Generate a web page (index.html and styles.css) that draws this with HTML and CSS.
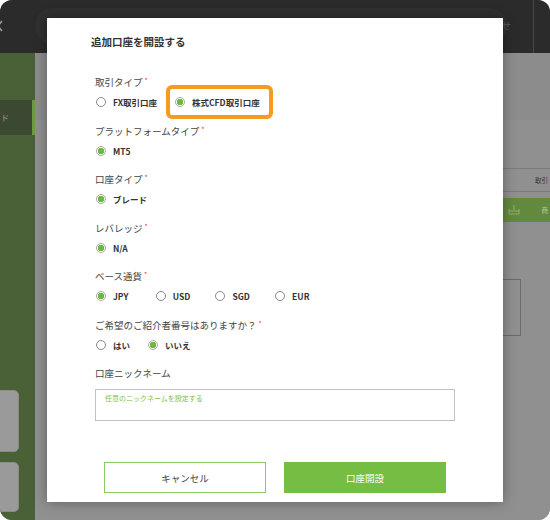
FILE: index.html
```html
<!DOCTYPE html>
<html lang="ja">
<head>
<meta charset="utf-8">
<title>追加口座を開設する</title>
<link rel="stylesheet" href="styles.css">
</head>
<body>
<div class="window">
  <header class="topbar">
    <svg class="back" width="8" height="12" viewBox="0 0 8 12"><path d="M5 1 L1 6 L5 11" fill="none" stroke="#9a9a9a" stroke-width="1.6"/></svg>
    <div class="pill"><span class="pill-text">お知らせ</span></div>
    <div class="divider"></div>
  </header>
  <div class="content">
    <aside class="sidebar">
      <div class="side-item"><span>ド</span></div>
      <div class="side-box side-box--tall"></div>
      <div class="side-box"></div>
    </aside>
    <main class="main">
      <div class="m-head"></div>
      <div class="m-row"><span>取引</span></div>
      <div class="m-band">
        <svg width="12" height="10" viewBox="0 0 12 10"><path d="M6 0 V5 M1 4 V9 H11 V4 M1 6 H11" fill="none" stroke="#8fb06a" stroke-width="1"/></svg>
        <span>商</span>
      </div>
      <div class="m-box"></div>
    </main>
  </div>

  <div class="modal">
    <h1 class="title">追加口座を開設する</h1>

    <div class="field">
      <div class="label">取引タイプ<i>*</i></div>
      <div class="options">
        <span class="option"><span class="radio"></span>FX取引口座</span>
        <span class="option option--hl"><span class="radio radio--on"></span>株式CFD取引口座</span>
      </div>
    </div>

    <div class="field">
      <div class="label">プラットフォームタイプ<i>*</i></div>
      <div class="options">
        <span class="option"><span class="radio radio--on"></span>MT5</span>
      </div>
    </div>

    <div class="field">
      <div class="label">口座タイプ<i>*</i></div>
      <div class="options">
        <span class="option"><span class="radio radio--on"></span>ブレード</span>
      </div>
    </div>

    <div class="field">
      <div class="label">レバレッジ<i>*</i></div>
      <div class="options">
        <span class="option"><span class="radio radio--on"></span>N/A</span>
      </div>
    </div>

    <div class="field">
      <div class="label">ベース通貨<i>*</i></div>
      <div class="options options--fixed">
        <span class="option"><span class="radio radio--on"></span>JPY</span>
        <span class="option"><span class="radio"></span>USD</span>
        <span class="option"><span class="radio"></span>SGD</span>
        <span class="option"><span class="radio"></span>EUR</span>
      </div>
    </div>

    <div class="field">
      <div class="label">ご希望のご紹介者番号はありますか？<i>*</i></div>
      <div class="options">
        <span class="option"><span class="radio"></span>はい</span>
        <span class="option"><span class="radio radio--on"></span>いいえ</span>
      </div>
    </div>

    <div class="field field--nick">
      <div class="label">口座ニックネーム</div>
      <textarea class="nick" placeholder="任意のニックネームを設定する"></textarea>
    </div>

    <div class="actions">
      <button class="btn btn--cancel">キャンセル</button>
      <button class="btn btn--primary">口座開設</button>
    </div>
  </div>
</div>
</body>
</html>
```

FILE: styles.css
```css
* { box-sizing: border-box; }
html, body { margin: 0; padding: 0; background: #ffffff; }
body {
  font-family: "Noto Sans CJK JP", "Noto Sans", sans-serif;
  width: 550px;
  height: 520px;
}

.window {
  position: relative;
  width: 550px;
  height: 520px;
  border-radius: 12px;
  overflow: hidden;
  display: flex;
  flex-direction: column;
  background: #8f8f8f;
}

/* top bar */
.topbar {
  height: 53px;
  flex: none;
  background: #2b2b2b;
  display: flex;
  align-items: center;
}
.back { margin-left: -3px; margin-top: -2px; flex: none; }
.pill {
  margin-left: 30px;
  width: 472px;
  height: 36px;
  border-radius: 18px;
  background: #303030;
  display: flex;
  align-items: center;
  justify-content: flex-end;
  margin-top: -2px;
}
.pill-text {
  font-size: 9px;
  color: #5a5a5a;
  margin-right: -4px;
}
.divider {
  margin-left: 26px;
  width: 1px;
  align-self: stretch;
  background: #474747;
}

/* content */
.content {
  flex: 1;
  display: flex;
  min-height: 0;
}
.sidebar {
  width: 35px;
  flex: none;
  background: #4a6137;
  display: flex;
  flex-direction: column;
  padding-bottom: 8px;
}
.side-item {
  margin-top: 47px;
  height: 35px;
  background: #3b4932;
  border-right: 3px solid #6a9c46;
  display: flex;
  align-items: center;
  font-size: 8px;
  color: #9a9a9a;
  padding-left: 1px;
}
.side-box {
  margin-left: -8px;
  width: 27px;
  height: 50px;
  border-radius: 5px;
  background: #9a9a9a;
  border: 1px solid #8a8a8a;
  margin-top: 10px;
}
.side-box--tall {
  margin-top: auto;
  height: 62px;
}

.main {
  flex: 1;
  display: flex;
  flex-direction: column;
  background: #909090;
}
.m-head {
  height: 67px;
  background: #8c8c8c;
}
.m-row {
  margin-top: 48px;
  margin-left: 20px;
  height: 24px;
  border-top: 1px solid #7b7b7b;
  border-bottom: 1px solid #7b7b7b;
  display: flex;
  align-items: center;
  justify-content: flex-end;
  padding-right: 2px;
  font-size: 6.5px;
  color: #333;
  white-space: nowrap;
}
.m-band {
  margin-top: 6px;
  margin-left: 20px;
  height: 24px;
  background: #628a3e;
  display: flex;
  align-items: center;
  justify-content: flex-end;
  padding-right: 2px;
  gap: 22px;
  font-size: 6.5px;
  color: #b7cba3;
  white-space: nowrap;
}
.m-box {
  margin-top: 57px;
  margin-left: 20px;
  margin-right: 29px;
  height: 57px;
  border: 1px solid #6b6b6b;
}

/* modal */
.modal {
  position: absolute;
  left: 47px;
  top: 18px;
  width: 456px;
  height: 484px;
  background: #ffffff;
  box-shadow: 0 0 12px rgba(0, 0, 0, 0.35);
  padding: 16px 48px 0 48px;
  display: flex;
  flex-direction: column;
}
.title {
  margin: 0;
  height: 16px;
  font-size: 10.5px;
  line-height: 16px;
  font-weight: 700;
  color: #333;
  margin-left: -4px;
}
.field {
  display: flex;
  flex-direction: column;
  gap: 6px;
  margin-top: 14.5px;
}
.field:first-of-type { margin-top: 25px; }
.label {
  height: 14px;
  font-size: 9.5px;
  line-height: 14px;
  color: #444;
  white-space: nowrap;
}
.label i {
  font-style: normal;
  color: #e03c3c;
  font-size: 7px;
  line-height: 0;
  position: relative;
  top: -3px;
  margin-left: 2px;
}
.options {
  display: flex;
  align-items: center;
  gap: 18px;
  height: 14px;
  padding-left: 1px;
}
.options--fixed { gap: 0; }
.options--fixed .option { width: 59.7px; }
.option {
  position: relative;
  display: inline-flex;
  align-items: center;
  gap: 7px;
  height: 14px;
  line-height: 14px;
  font-size: 8.5px;
  font-weight: 700;
  color: #333;
  white-space: nowrap;
}
.option--hl::after {
  content: "";
  position: absolute;
  left: -9px;
  right: -13px;
  top: -10px;
  bottom: -10px;
  border: 4px solid #f59b22;
  border-radius: 6px;
}
.radio {
  width: 10px;
  height: 10px;
  flex: none;
  border-radius: 50%;
  border: 1px solid #8a8a8a;
  background: #fff;
}
.radio--on {
  border: 1.3px solid #a8a8a8;
  background: radial-gradient(circle, #6abd3a 0, #6abd3a 3px, #ffffff 3.5px);
}

.field--nick { gap: 9px; margin-top: 14.5px; }
.nick {
  display: block;
  width: 360px;
  height: 32px;
  border: 1px solid #c2c2c2;
  resize: none;
  font-family: inherit;
  font-size: 7px;
  line-height: 10px;
  padding: 3px 9px;
  margin: 0;
  outline: none;
}
.nick::placeholder { color: #7cbf4c; }

.actions {
  margin-top: 41px;
  margin-left: -48px;
  margin-right: -48px;
  display: flex;
  justify-content: center;
  gap: 18px;
}
.btn {
  width: 162px;
  height: 31px;
  font-family: inherit;
  font-size: 9.5px;
  padding: 0;
  cursor: pointer;
}
.btn--cancel {
  background: #fff;
  border: 1.5px solid #8bcb60;
  color: #444;
}
.btn--primary {
  background: #75bd43;
  border: none;
  color: #ffffff;
}
```
